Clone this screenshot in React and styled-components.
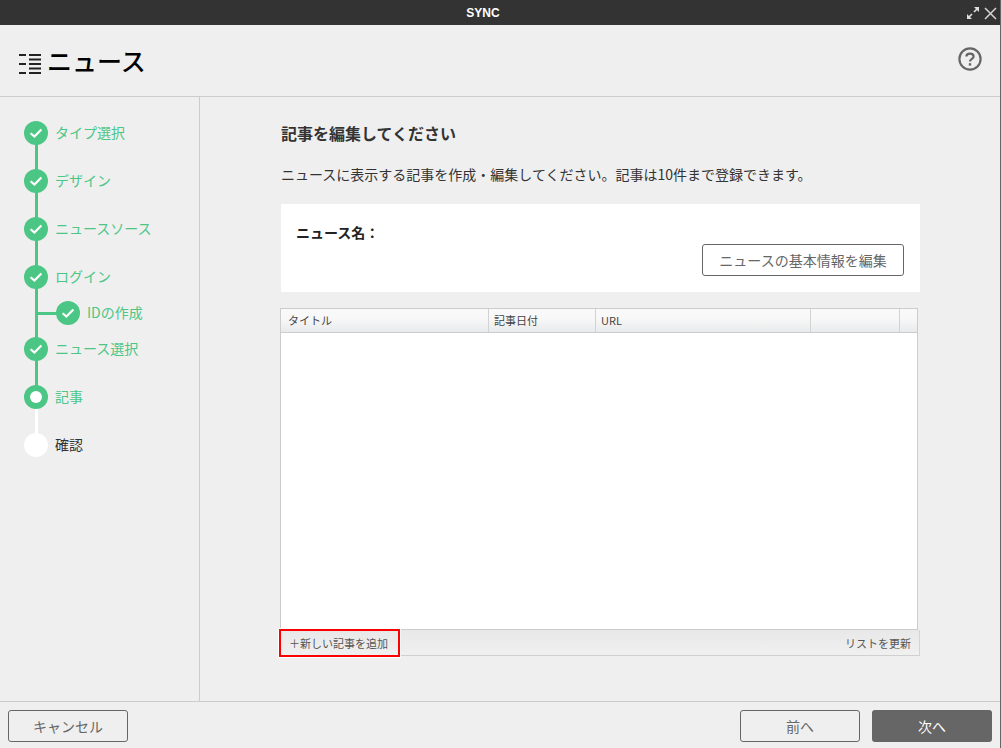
import React from "react";
import styled, { createGlobalStyle } from "styled-components";

const GlobalStyle = createGlobalStyle`
  html, body { margin: 0; padding: 0; height: 100%; overflow: hidden; }
  body {
    background: #efefef;
    color: #333;
    font-family: "Noto Sans CJK JP", "Noto Sans", sans-serif;
  }
  * { box-sizing: border-box; }
`;

const GREEN = "#4bc685";

const Window = styled.div`
  width: 1001px;
  height: 748px;
  display: flex;
  flex-direction: column;
  background: #efefef;
  border-right: 1px solid #666;
`;

const TitleBar = styled.div`
  height: 25px;
  flex: none;
  display: flex;
  align-items: center;
  background: #333;
  padding: 0 3px 0 0;
`;

const TitleText = styled.div`
  flex: 1;
  text-align: center;
  color: #fff;
  font-family: "Liberation Sans", sans-serif;
  font-size: 12px;
  font-weight: 700;
`;

const WindowButtons = styled.div`
  display: flex;
  align-items: center;
  gap: 4px;
  padding-top: 1px;
`;

const Header = styled.header`
  height: 72px;
  flex: none;
  display: flex;
  align-items: center;
  justify-content: space-between;
  padding: 2px 18px 5px 19px;
  border-bottom: 1px solid #ccc;
`;

const HeaderTitle = styled.h1`
  display: flex;
  align-items: center;
  gap: 6px;
  margin: 2px 0 0;
  font-size: 25px;
  line-height: 32px;
  font-weight: 500;
  color: #000;
`;

const ListIcon = styled.svg`
  margin-top: 7px;
`;

const Body = styled.div`
  flex: 1;
  display: flex;
  min-height: 0;
`;

const Sidebar = styled.nav`
  width: 200px;
  flex: none;
  border-right: 1px solid #ccc;
  padding-top: 12px;
`;

const Step = styled.div`
  position: relative;
  height: ${p => (p.$sub ? 24 : 48)}px;
  display: flex;
  align-items: center;
  gap: 7px;
  padding-left: ${p => (p.$sub ? 56 : 24)}px;
  font-size: 14px;
  color: ${p => (p.$state === "todo" ? "#333" : GREEN)};

  &::before {
    content: "";
    display: ${p => (p.$last ? "none" : "block")};
    position: absolute;
    left: 35px;
    top: 24px;
    width: 3px;
    height: ${p => p.$lineHeight || 48}px;
    background: ${p => (p.$state === "current" ? "#fff" : GREEN)};
  }
`;

const StepLabel = styled.span`
  padding-bottom: 2px;
`;

const Branch = styled.span`
  position: absolute;
  left: 36px;
  top: 11px;
  width: 22px;
  height: 3px;
  background: ${GREEN};
`;

const Circle = styled.span`
  position: relative;
  width: 24px;
  height: 24px;
  flex: none;
  border-radius: 50%;
  display: flex;
  align-items: center;
  justify-content: center;
  background: ${p => (p.$state === "todo" ? "#fff" : GREEN)};
`;

const Dot = styled.span`
  width: 12px;
  height: 12px;
  border-radius: 50%;
  background: #fff;
`;

const Main = styled.main`
  flex: 1;
  padding: 24px 80px 0 81px;
  min-width: 0;
`;

const Heading = styled.h2`
  margin: 0;
  font-size: 16px;
  line-height: 24px;
  font-weight: 700;
  color: #333;
`;

const Description = styled.p`
  margin: 17px 0 0;
  font-size: 14px;
  line-height: 24px;
  color: #333;
`;

const InfoPanel = styled.section`
  margin-top: 18px;
  height: 88px;
  background: #fff;
  padding: 16px 16px 16px 15px;
  display: flex;
  flex-direction: column;
`;

const InfoLabel = styled.div`
  font-size: 14px;
  line-height: 24px;
  font-weight: 700;
  color: #222;
`;

const Button = styled.button`
  width: ${p => p.$width || 120}px;
  height: 32px;
  padding: 0;
  border: ${p => (p.$primary ? "none" : "1px solid #666")};
  border-radius: 3px;
  background: ${p => (p.$primary ? "#666" : "transparent")};
  color: ${p => (p.$primary ? "#fff" : "#666")};
  font-family: inherit;
  font-size: 14px;
  line-height: 1;
`;

const EditButton = styled(Button)`
  align-self: flex-end;
`;

const TableFrame = styled.div`
  margin-top: 16px;
  margin-left: -1px;
  width: 638px;
  height: 322px;
  background: #fff;
  border: 1px solid #ccc;
`;

const TableHead = styled.div`
  display: grid;
  grid-template-columns: 208px 107px 215px 89px 1fr;
  height: 24px;
  border-bottom: 1px solid #ccc;
  background: linear-gradient(#f9f9f9 0%, #f8f8f8 40%, #e9eaec 100%);
`;

const HeadCell = styled.div`
  padding-left: ${p => p.$pad || 6}px;
  border-right: 1px solid #d2d2d2;
  font-size: 11px;
  line-height: 23px;
  color: #444;

  &:last-child { border-right: 0; }
`;

const Toolbar = styled.div`
  width: 640px;
  margin-left: -1px;
  height: 26px;
  display: flex;
  align-items: center;
  justify-content: space-between;
  padding-right: 8px;
  background: linear-gradient(#e8e8e8, #f0f0f0);
  border-right: 1px solid #d4d4d4;
  border-bottom: 1px solid #d0d0d0;
  font-size: 11px;
  color: #555;
`;

const AddButton = styled.div`
  position: relative;
  z-index: 1;
  width: 121px;
  height: 28px;
  margin: -1px 0 -1px -1px;
  display: flex;
  align-items: center;
  padding-left: 8px;
  border: 2px solid #f00;
  box-shadow: 0 0 0 1px #fff;
  background: linear-gradient(#e8e8e8, #f0f0f0);
`;

const Footer = styled.footer`
  height: 47px;
  flex: none;
  display: flex;
  align-items: center;
  justify-content: space-between;
  padding: 2px 8px 0 8px;
  border-top: 1px solid #ccc;
`;

const FooterRight = styled.div`
  display: flex;
  gap: 12px;
`;

const Check = () => (
  <svg width="14" height="12" viewBox="0 0 14 12" fill="none">
    <path d="M1.6 6.2 L5.4 9.6 L12.4 2.4" stroke="#fff" strokeWidth="2.2" />
  </svg>
);

const steps = [
  { label: "タイプ選択", state: "done" },
  { label: "デザイン", state: "done" },
  { label: "ニュースソース", state: "done" },
  { label: "ログイン", state: "done", lineHeight: 72 },
  { label: "IDの作成", state: "done", sub: true, last: true },
  { label: "ニュース選択", state: "done" },
  { label: "記事", state: "current" },
  { label: "確認", state: "todo", last: true },
];

const columns = [
  { label: "タイトル", pad: 7 },
  { label: "記事日付", pad: 5 },
  { label: "URL", pad: 5 },
  { label: "" },
  { label: "" },
];

export default function App() {
  return (
    <Window>
      <GlobalStyle />
      <TitleBar>
        <TitleText>SYNC</TitleText>
        <WindowButtons>
          <svg width="14" height="14" viewBox="0 0 14 14" fill="none">
            <path d="M8 6 L12 2 M2 12 L6 8" stroke="#ddd" strokeWidth="1.7" />
            <path d="M8 1 H13 V6 Z M1 8 V13 H6 Z" fill="#ddd" />
          </svg>
          <svg width="13" height="13" viewBox="0 0 13 13" fill="none">
            <path d="M1 1 L12 12 M12 1 L1 12" stroke="#d4d4d4" strokeWidth="1.5" />
          </svg>
        </WindowButtons>
      </TitleBar>

      <Header>
        <HeaderTitle>
          <ListIcon width="22" height="22" viewBox="0 0 22 22" fill="#222">
            <rect x="0" y="1" width="7" height="2" />
            <rect x="0" y="10" width="7" height="2" />
            <rect x="0" y="19" width="7" height="2" />
            <rect x="10" y="1" width="12" height="2" />
            <rect x="10" y="5.5" width="12" height="2" />
            <rect x="10" y="10" width="12" height="2" />
            <rect x="10" y="14.5" width="12" height="2" />
            <rect x="10" y="19" width="12" height="2" />
          </ListIcon>
          ニュース
        </HeaderTitle>
        <svg width="24" height="24" viewBox="0 0 24 24" fill="none">
          <circle cx="12" cy="12" r="10.6" stroke="#666" strokeWidth="2.2" />
          <path d="M8.4 9.4 C8.4 5.6 15.6 5.6 15.6 9.4 C15.6 12 12 11.8 12 14.6" stroke="#666" strokeWidth="2.2" />
          <rect x="10.8" y="16.2" width="2.4" height="2.4" fill="#666" />
        </svg>
      </Header>

      <Body>
        <Sidebar>
          {steps.map(step => (
            <Step
              key={step.label}
              $state={step.state}
              $sub={step.sub}
              $last={step.last}
              $lineHeight={step.lineHeight}
            >
              {step.sub && <Branch />}
              <Circle $state={step.state}>
                {step.state === "done" && <Check />}
                {step.state === "current" && <Dot />}
              </Circle>
              <StepLabel>{step.label}</StepLabel>
            </Step>
          ))}
        </Sidebar>

        <Main>
          <Heading>記事を編集してください</Heading>
          <Description>
            ニュースに表示する記事を作成・編集してください。記事は10件まで登録できます。
          </Description>
          <InfoPanel>
            <InfoLabel>ニュース名：</InfoLabel>
            <EditButton $width={202}>ニュースの基本情報を編集</EditButton>
          </InfoPanel>
          <TableFrame>
            <TableHead>
              {columns.map((col, i) => (
                <HeadCell key={i} $pad={col.pad}>{col.label}</HeadCell>
              ))}
            </TableHead>
          </TableFrame>
          <Toolbar>
            <AddButton>＋新しい記事を追加</AddButton>
            <span>リストを更新</span>
          </Toolbar>
        </Main>
      </Body>

      <Footer>
        <Button>キャンセル</Button>
        <FooterRight>
          <Button>前へ</Button>
          <Button $primary>次へ</Button>
        </FooterRight>
      </Footer>
    </Window>
  );
}
